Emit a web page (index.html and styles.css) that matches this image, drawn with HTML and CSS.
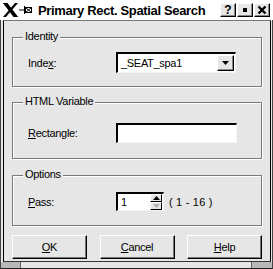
FILE: index.html
```html
<!DOCTYPE html>
<html>
<head>
<meta charset="utf-8">
<link rel="stylesheet" href="styles.css">
</head>
<body>
<div class="win">
  <div class="titlebar">
    <svg class="xlogo" width="15" height="14" viewBox="0 0 15 14">
      <polygon points="0,0 3,0 15,14 12,14" fill="#000"/>
      <polygon points="12,0 15,0 3,14 0,14" fill="#000"/>
      <polygon points="0,0 4.5,0 15,14 10.5,14" fill="#000"/>
    </svg>
    <svg class="pin" width="14" height="10" viewBox="0 0 14 10">
      <line x1="0" y1="5" x2="5" y2="5" stroke="#000" stroke-width="1"/>
      <line x1="5.5" y1="1" x2="5.5" y2="9" stroke="#000" stroke-width="1"/>
      <rect x="6.5" y="2.5" width="6" height="5" fill="none" stroke="#000" stroke-width="1"/>
      <line x1="6.5" y1="2.5" x2="12.5" y2="7.5" stroke="#000" stroke-width="1"/>
      <line x1="12.5" y1="2.5" x2="6.5" y2="7.5" stroke="#000" stroke-width="1"/>
    </svg>
    <span class="title">Primary Rect. Spatial Search</span>
    <div class="tbtns">
      <span class="tbtn">?</span>
      <span class="tbtn"><span class="dot"></span></span>
      <span class="tbtn">
        <svg width="10" height="10" viewBox="0 0 10 10"><path d="M1.5 1.5 L8.5 8.5 M8.5 1.5 L1.5 8.5" stroke="#000" stroke-width="2.4"/></svg>
      </span>
    </div>
  </div>
  <div class="frame">
    <div class="inner">
      <div class="group g1">
        <span class="legend">Identity</span>
        <div class="row">
          <span class="label">Inde<u>x</u>:</span>
          <div class="combo">
            <span class="combo-text">_SEAT_spa1</span>
            <span class="drop"><svg width="7" height="4" viewBox="0 0 7 4"><polygon points="0,0 7,0 3.5,4" fill="#000"/></svg></span>
          </div>
        </div>
      </div>
      <div class="group g2">
        <span class="legend">HTML Variable</span>
        <div class="row">
          <span class="label"><u>R</u>ectangle:</span>
          <div class="field"></div>
        </div>
      </div>
      <div class="group g3">
        <span class="legend">Options</span>
        <div class="row">
          <span class="label"><u>P</u>ass:</span>
          <div class="spin">
            <span class="spin-text">1</span>
            <span class="spin-btns">
              <span class="sb"><svg width="7" height="4" viewBox="0 0 7 4"><polygon points="3.5,0 7,4 0,4" fill="#000"/></svg></span>
              <span class="sb"><svg width="7" height="4" viewBox="0 0 7 4"><polygon points="0,0 7,0 3.5,4" fill="#b0b0b0"/></svg></span>
            </span>
          </div>
          <span class="range">( 1 - 16 )</span>
        </div>
      </div>
      <div class="buttons">
        <span class="btn"><u>O</u>K</span>
        <span class="btn"><u>C</u>ancel</span>
        <span class="btn"><u>H</u>elp</span>
      </div>
    </div>
  </div>
  <div class="bottom">
    <span class="grip gl"></span>
    <span class="mid"></span>
    <span class="grip gr"></span>
  </div>
</div>
</body>
</html>
```
FILE: styles.css
```css
html, body {
  margin: 0;
  padding: 0;
  background: #e6e6e6;
}
.win {
  width: 273px;
  height: 269px;
  display: flex;
  flex-direction: column;
  font-family: "Liberation Sans", Arial, sans-serif;
  font-size: 11px;
  letter-spacing: -0.3px;
  color: #000;
  overflow: hidden;
}
.titlebar {
  height: 20px;
  background: #fff;
  display: flex;
  align-items: center;
  padding-left: 3px;
  box-sizing: border-box;
  flex: none;
}
.xlogo { flex: none; margin-top: -1px; }
.pin { flex: none; margin-left: 1px; }
.title {
  font-size: 13px;
  font-weight: bold;
  letter-spacing: -0.35px;
  margin-left: 5px;
  white-space: nowrap;
}
.tbtns {
  margin-left: auto;
  display: flex;
  gap: 1px;
  margin-right: 3px;
}
.tbtn {
  width: 16px;
  height: 14px;
  box-sizing: border-box;
  background: #e6e6e6;
  border: 1px solid;
  border-color: #fff #000 #000 #fff;
  box-shadow: inset -1px -1px 0 #888;
  display: flex;
  align-items: center;
  justify-content: center;
  font-weight: bold;
  font-size: 12px;
  letter-spacing: 0;
}
.dot {
  width: 4px;
  height: 4px;
  background: #000;
}
.frame {
  flex: 1;
  display: flex;
  border-left: 1px solid #444;
  border-right: 1px solid #444;
  padding: 0 1px 0 2px;
}
.inner {
  flex: 1;
  border-left: 1px solid #000;
  border-right: 1px solid #000;
  border-top: 1px solid #777;
  border-bottom: 1px solid #333;
  padding: 16px 8px 0 8px;
  display: flex;
  flex-direction: column;
}
.group {
  position: relative;
  border: 1px solid #7a7a7a;
  box-shadow: 1px 1px 0 #fff, inset 1px 1px 0 #fff;
  padding: 0 15px;
  display: flex;
  align-items: center;
}
.g1 { height: 48px; }
.g2 { height: 55px; margin-top: 15px; }
.g3 { height: 49px; margin-top: 16px; }
.legend {
  position: absolute;
  left: 10px;
  top: -9px;
  padding: 0 2px;
  background: #e6e6e6;
  line-height: 14px;
}
.row {
  display: flex;
  align-items: center;
  width: 100%;
}
.label {
  width: 88px;
  flex: none;
}
.g1 .row { margin-top: 1px; }
.g2 .row { margin-top: 4px; }
.g3 .row { margin-top: 2px; }
.combo {
  width: 120px;
  height: 21px;
  box-sizing: border-box;
  background: #fff;
  border-top: 2px solid #000;
  border-left: 2px solid #000;
  border-right: 1px solid #f4f4f4;
  border-bottom: 1px solid #f4f4f4;
  display: flex;
  align-items: center;
  padding-left: 3px;
}
.combo-text { flex: 1; }
.drop {
  width: 17px;
  height: 16px;
  box-sizing: border-box;
  background: #e6e6e6;
  border: 1px solid;
  border-color: #fff #000 #000 #fff;
  box-shadow: inset -1px -1px 0 #888;
  display: flex;
  align-items: center;
  justify-content: center;
  margin-right: 1px;
}
.field {
  width: 121px;
  height: 20px;
  box-sizing: border-box;
  background: #fff;
  border-top: 2px solid #000;
  border-left: 2px solid #000;
  border-right: 1px solid #f4f4f4;
  border-bottom: 1px solid #f4f4f4;
}
.spin {
  width: 48px;
  height: 19px;
  box-sizing: border-box;
  background: #fff;
  border-top: 2px solid #000;
  border-left: 2px solid #000;
  border-right: 1px solid #f4f4f4;
  border-bottom: 1px solid #f4f4f4;
  display: flex;
  align-items: center;
  padding-left: 3px;
}
.spin-text { flex: 1; }
.spin-btns {
  display: flex;
  flex-direction: column;
  width: 12px;
  height: 16px;
  margin-right: 1px;
}
.sb {
  flex: 1;
  box-sizing: border-box;
  background: #e6e6e6;
  border: 1px solid;
  border-color: #fff #000 #000 #fff;
  display: flex;
  align-items: center;
  justify-content: center;
}
.range {
  margin-left: 5px;
  letter-spacing: 0.2px;
}
.buttons {
  display: flex;
  justify-content: space-between;
  margin-top: 9px;
}
.btn {
  width: 75px;
  height: 24px;
  box-sizing: border-box;
  border: 1px solid;
  border-color: #fff #000 #000 #fff;
  box-shadow: inset -1px -1px 0 #777;
  display: flex;
  align-items: center;
  justify-content: center;
}
.bottom {
  height: 7px;
  flex: none;
  display: flex;
  border-bottom: 1px solid #222;
  border-left: 1px solid #444;
  border-right: 1px solid #444;
  box-sizing: border-box;
}
.grip {
  width: 19px;
  background: #b8b8b8;
  flex: none;
}
.gl { border-right: 1px solid #666; }
.gr { width: 20px; border-left: 1px solid #666; }
.mid { flex: 1; background: #e6e6e6; }
```
